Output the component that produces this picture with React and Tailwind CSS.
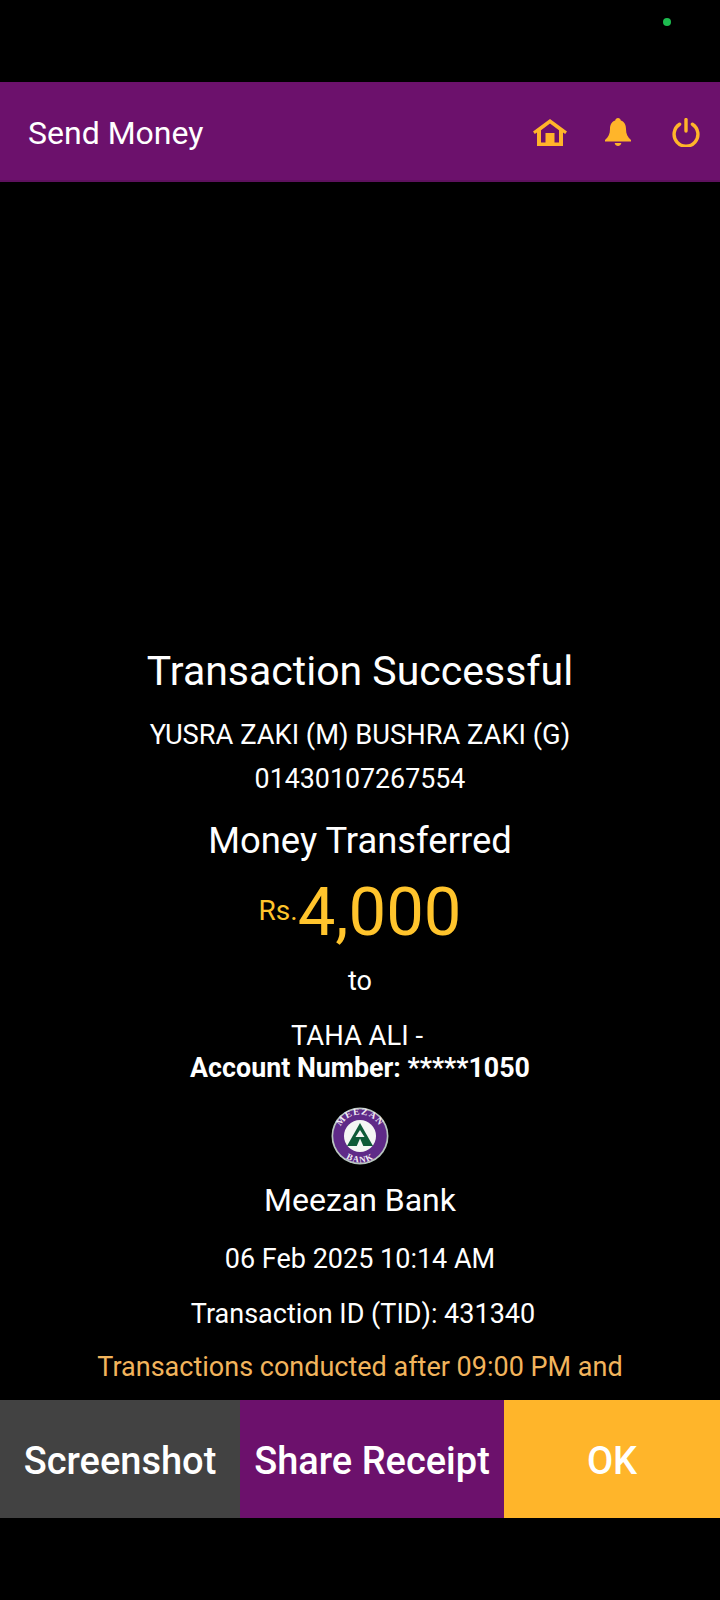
const ROW_TEXT = "text-center text-white";

function HomeIcon() {
  return (
    <svg viewBox="0 0 34 27" className="h-[27px] w-[34px]" fill="#FFB52A">
      <path d="M17 0 L34 12.6 L32.2 15 L30 13.4 V27 H4 V13.4 L1.8 15 L0 12.6 Z M17 4.6 L8 11.2 V23.5 H12.5 V14 H21.5 V23.5 H26 V11.2 Z" fillRule="evenodd" />
      <rect x="13" y="14" width="8" height="13" />
    </svg>
  );
}

function BellIcon() {
  return (
    <svg viewBox="0 0 26 28" className="h-[28px] w-[26px]" fill="#FFB52A">
      <path d="M13 0 C14.5 0 15.6 1 15.8 2.4 C19.6 3.6 21 7 21 11 C21 16 22.6 19 26 22 V23.4 H0 V22 C3.4 19 5 16 5 11 C5 7 6.4 3.6 10.2 2.4 C10.4 1 11.5 0 13 0 Z" />
      <path d="M9.6 25 H16.4 C16 27 14.6 28 13 28 C11.4 28 10 27 9.6 25 Z" />
    </svg>
  );
}

function PowerIcon() {
  return (
    <svg viewBox="0 0 28 29" className="h-[29px] w-[28px]" fill="none" stroke="#FFB52A" strokeWidth="3.4" strokeLinecap="round">
      <path d="M14 1.6 V13" />
      <path d="M7.6 6.2 A11.9 11.9 0 1 0 20.4 6.2" />
    </svg>
  );
}

function MeezanLogo() {
  return (
    <svg viewBox="0 0 58 58" className="h-[58px] w-[58px]">
      <circle cx="29" cy="29" r="28.5" fill="#B9C6C0" />
      <circle cx="29" cy="29" r="26.8" fill="#5F2A88" />
      <circle cx="29" cy="29" r="16" fill="#F4F6F4" />
      <path d="M29 16 L42 39 H16 Z" fill="#0E5A38" />
      <path d="M29 23 L33.5 30 H24.5 Z" fill="#F4F6F4" />
      <path d="M29 31.5 L32.5 39.5 H25.5 Z" fill="#F4F6F4" />
      <defs>
        <path id="logoTop" d="M7.5 29 A21.5 21.5 0 0 1 50.5 29" />
        <path id="logoBottom" d="M2.5 29 A26.5 26.5 0 0 0 55.5 29" />
      </defs>
      <text fill="#F1ECF5" fontSize="9.5" fontWeight="700" letterSpacing="1" fontFamily="'Liberation Serif', serif" textAnchor="middle">
        <textPath href="#logoTop" startOffset="50%">MEEZAN</textPath>
      </text>
      <text fill="#F1ECF5" fontSize="9" fontWeight="700" letterSpacing="1" fontFamily="'Liberation Serif', serif" textAnchor="middle">
        <textPath href="#logoBottom" startOffset="50%">BANK</textPath>
      </text>
    </svg>
  );
}

export default function App() {
  return (
    <div className="flex h-[1600px] w-[720px] flex-col overflow-hidden bg-black font-['Roboto',sans-serif]">
      {/* Status bar */}
      <div className="flex h-[82px] justify-end pt-[18px] pr-[49px]">
        <span className="h-2 w-2 rounded-full bg-[#1DBB4F]" />
      </div>

      {/* Header */}
      <header className="flex h-[100px] items-center justify-between border-b-2 border-[#5E115E] bg-[#6C116C] pr-[20px] pl-[28px]">
        <h1 className="pt-[3px] text-[32px] font-normal text-white">Send Money</h1>
        <div className="flex items-center pt-[2px]">
          <HomeIcon />
          <div className="ml-[38px]"><BellIcon /></div>
          <div className="ml-[41px]"><PowerIcon /></div>
        </div>
      </header>

      {/* Receipt */}
      <main className="flex h-[1206px] flex-col items-center overflow-hidden pt-[465px]">
        <p className={`${ROW_TEXT} text-[41px] leading-[48px]`}>Transaction Successful</p>
        <p className={`${ROW_TEXT} mt-[19px] text-[27.3px] leading-[43px]`}>YUSRA ZAKI (M) BUSHRA ZAKI (G)</p>
        <p className={`${ROW_TEXT} mt-px text-[26.8px] leading-[43px]`}>01430107267554</p>
        <p className={`${ROW_TEXT} mt-4 text-[36.4px] leading-[48px]`}>Money Transferred</p>
        <div className="mt-[9px] flex h-[76px] items-center text-[#FFC42C]">
          <span className="mb-[3px] text-[28px]">Rs.</span>
          <span className="text-[67px] leading-[76px]">4,000</span>
        </div>
        <p className={`${ROW_TEXT} mt-[11px] text-[27px] leading-[40px]`}>to</p>
        <p className={`${ROW_TEXT} mt-[19px] pr-[6px] text-[27.4px] leading-[32px]`}>TAHA ALI -</p>
        <p className={`${ROW_TEXT} text-[26.8px] font-bold leading-[32px]`}>Account Number: *****1050</p>
        <div className="mt-[23px]"><MeezanLogo /></div>
        <p className={`${ROW_TEXT} mt-[15px] text-[32px] leading-[40px]`}>Meezan Bank</p>
        <p className={`${ROW_TEXT} mt-[21px] text-[27px] leading-[36px]`}>06 Feb 2025 10:14 AM</p>
        <p className={`${ROW_TEXT} mt-[19px] pl-[6px] text-[27px] leading-[36px]`}>Transaction ID (TID): 431340</p>
        <p className="mt-[19px] w-[540px] text-center text-[27px] leading-[33px] text-[#F2B45C]">
          Transactions conducted after 09:00 PM and on bank holidays will be processed the next working day
        </p>
      </main>

      {/* Actions */}
      <footer className="mt-[12px] flex h-[118px] text-[38px] font-medium text-white">
        <button className="w-[240px] bg-[#424242] pt-1">Screenshot</button>
        <button className="w-[264px] bg-[#6C116C] pt-1">Share Receipt</button>
        <button className="flex-1 bg-[#FFB52A] pt-1">OK</button>
      </footer>
    </div>
  );
}
